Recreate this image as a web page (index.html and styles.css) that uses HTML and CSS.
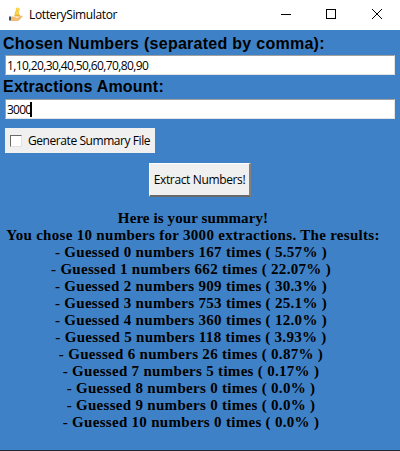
FILE: index.html
```html
<!DOCTYPE html>
<html lang="en">
<head>
<meta charset="utf-8">
<title>LotterySimulator</title>
<link rel="stylesheet" href="styles.css">
</head>
<body>
<div class="window">
  <header class="titlebar">
    <svg class="logo" width="16" height="16" viewBox="0 0 16 16">
      <path d="M1 10.500h2v4H1z" fill="#35506b"/>
      <path d="M3 10.500h3l3 1.500 4-2.500 2 .5-3.500 4-2 1H3z" fill="#f2bd72"/>
      <path d="M6 8.500h6v2H7z" fill="#edb42e"/>
      <circle cx="9" cy="7" r="2.200" fill="#f5c634"/>
      <circle cx="9.700" cy="3.500" r="2" fill="#f7d03e"/>
      <path d="M9 2.500l1.500 1M8 6.500l2 1" stroke="#fff0a0"/>
    </svg>
    <span class="title">LotterySimulator</span>
    <svg class="controls" width="104" height="12" viewBox="0 0 104 12" fill="none" stroke="#000" shape-rendering="crispEdges">
      <path d="M0 6.500h10M45.500 1.500h9v9h-9z"/>
      <path d="M91 1l10 10M101 1l-10 10" shape-rendering="auto"/>
    </svg>
  </header>
  <main class="form">
    <label class="heading chosen" for="numbers">Chosen Numbers (separated by comma):</label>
    <div class="entry" id="numbers"><span class="numbers">1,10,20,30,40,50,60,70,80,90</span></div>
    <label class="heading amount" for="amount">Extractions Amount:</label>
    <div class="entry" id="amount"><span class="count">3000</span><i class="caret"></i></div>
    <div class="check"><i class="box"></i><span class="check-text">Generate Summary File</span></div>
    <button class="extract"><span class="extract-text">Extract Numbers!</span></button>
    <div class="summary">
      <p class="lead">Here is your summary!</p>
      <p>You chose 10 numbers for 3000 extractions. The results:</p>
      <p class="row">- Guessed 0 numbers 167 times ( 5.57% )</p>
      <p class="row">- Guessed 1 numbers 662 times ( 22.07% )</p>
      <p class="row">- Guessed 2 numbers 909 times ( 30.3% )</p>
      <p class="row">- Guessed 3 numbers 753 times ( 25.1% )</p>
      <p class="row">- Guessed 4 numbers 360 times ( 12.0% )</p>
      <p class="row">- Guessed 5 numbers 118 times ( 3.93% )</p>
      <p class="row">- Guessed 6 numbers 26 times ( 0.87% )</p>
      <p class="row">- Guessed 7 numbers 5 times ( 0.17% )</p>
      <p class="row">- Guessed 8 numbers 0 times ( 0.0% )</p>
      <p class="row">- Guessed 9 numbers 0 times ( 0.0% )</p>
      <p class="row">- Guessed 10 numbers 0 times ( 0.0% )</p>
    </div>
  </main>
</div>
</body>
</html>
```
FILE: styles.css
```css
* { box-sizing: border-box; }
body { margin: 0; overflow: hidden; font: 12px "Open Sans", "Noto Sans", sans-serif; color: #000; }
.window { width: 400px; height: 451px; display: flex; flex-direction: column; background: #3f81c7; border-bottom: 1px solid #202b38; }
.titlebar { height: 30px; flex: none; display: flex; align-items: center; padding-left: 8px; background: #fff; }
.logo { margin-top: -3px; }
.title { margin-left: 5px; margin-top: -1px; letter-spacing: -0.36px; }
.controls { margin-left: auto; margin-right: 15px; margin-top: -3px; }
.form { display: flex; flex-direction: column; }
.heading { height: 25px; padding-left: 3px; font: bold 16px/27px "Liberation Sans", Arial, sans-serif; white-space: nowrap; }
.amount { height: 24px; line-height: 24px; letter-spacing: 0.22px; }
.chosen { letter-spacing: 0.27px; }
.entry { height: 20px; margin: 0 5px; padding-left: 1px; display: flex; align-items: center; background: #fff; border-top: 1px solid #a0a0a0; border-left: 1px solid #a0a0a0; border-right: 1px solid #e3e3e3; border-bottom: 1px solid #e3e3e3; }
.numbers { letter-spacing: -0.61px; }
.count { width: 23px; letter-spacing: -0.75px; white-space: nowrap; }
.caret { width: 2px; height: 15px; background: #000; }
.check { width: 150px; height: 25px; margin: 9px 0 0 5px; padding-left: 5px; display: flex; align-items: center; background: #f0f0f0; }
.box { width: 12px; height: 12px; background: #fff; border: 1px solid #e3e3e3; border-top: 1px solid #696969; border-left: 1px solid #696969; }
.check-text { margin-left: 6px; letter-spacing: -0.43px; white-space: nowrap; }
.extract { width: 102px; height: 34px; margin: 10px 0 0 149px; padding: 0; font: inherit; color: #000; background: #f0f0f0; border: 2px solid; border-color: #fff #808080 #696969 #fff; border-width: 1px 2px 2px 1px; }
.extract-text { letter-spacing: -0.36px; white-space: nowrap; }
.summary { width: 386px; margin-top: 13px; text-align: center; font: bold 15px/17px "Liberation Serif", "Times New Roman", serif; letter-spacing: 0.3px; white-space: nowrap; }
.summary p { margin: 0; }
.summary .lead { letter-spacing: 0.1px; }
.summary .row { padding-right: 4px; }
```
